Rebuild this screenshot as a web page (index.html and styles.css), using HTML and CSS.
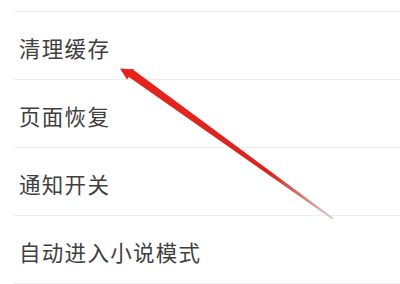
FILE: index.html
```html
<!DOCTYPE html>
<html lang="zh">
<head>
<meta charset="utf-8">
<link rel="stylesheet" href="styles.css">
</head>
<body>
<div class="page">
  <ul class="list">
    <li class="row">清理缓存</li>
    <li class="row">页面恢复</li>
    <li class="row">通知开关</li>
    <li class="row">自动进入小说模式</li>
  </ul>
  <div class="last-line"></div>
  <svg class="arrow" width="400" height="284" viewBox="0 0 400 284">
    <defs>
      <linearGradient id="fade" x1="122" y1="70" x2="333" y2="219" gradientUnits="userSpaceOnUse">
        <stop offset="0" stop-color="#e8231c"/>
        <stop offset="0.7" stop-color="#d9241e"/>
        <stop offset="1" stop-color="#cfcfcf"/>
      </linearGradient>
    </defs>
    <polygon points="126,75 131.5,68.5 333.5,218 332.5,219.5" fill="url(#fade)"/>
    <polygon points="120,68.5 134.5,69.5 127,79.5" fill="#e8231c"/>
  </svg>
</div>
</body>
</html>
```
FILE: styles.css
```css
html, body {
  margin: 0;
  padding: 0;
  background: #ffffff;
}
.page {
  position: relative;
  width: 400px;
  height: 284px;
  overflow: hidden;
  padding-top: 11px;
  box-sizing: border-box;
}
.list {
  list-style: none;
  margin: 0 0 0 14px;
  padding: 0;
}
.row {
  box-sizing: border-box;
  height: 68px;
  border-top: 1px solid #ededed;
  display: flex;
  align-items: center;
  padding: 3px 0 0 5px;
  font-family: "Noto Sans CJK SC", "Noto Sans", sans-serif;
  font-size: 21.5px;
  color: #404040;
  letter-spacing: 1.3px;
}
.last-line {
  margin-left: 14px;
  border-top: 1px solid #ededed;
}
.arrow {
  position: absolute;
  left: 0;
  top: 0;
}
```
